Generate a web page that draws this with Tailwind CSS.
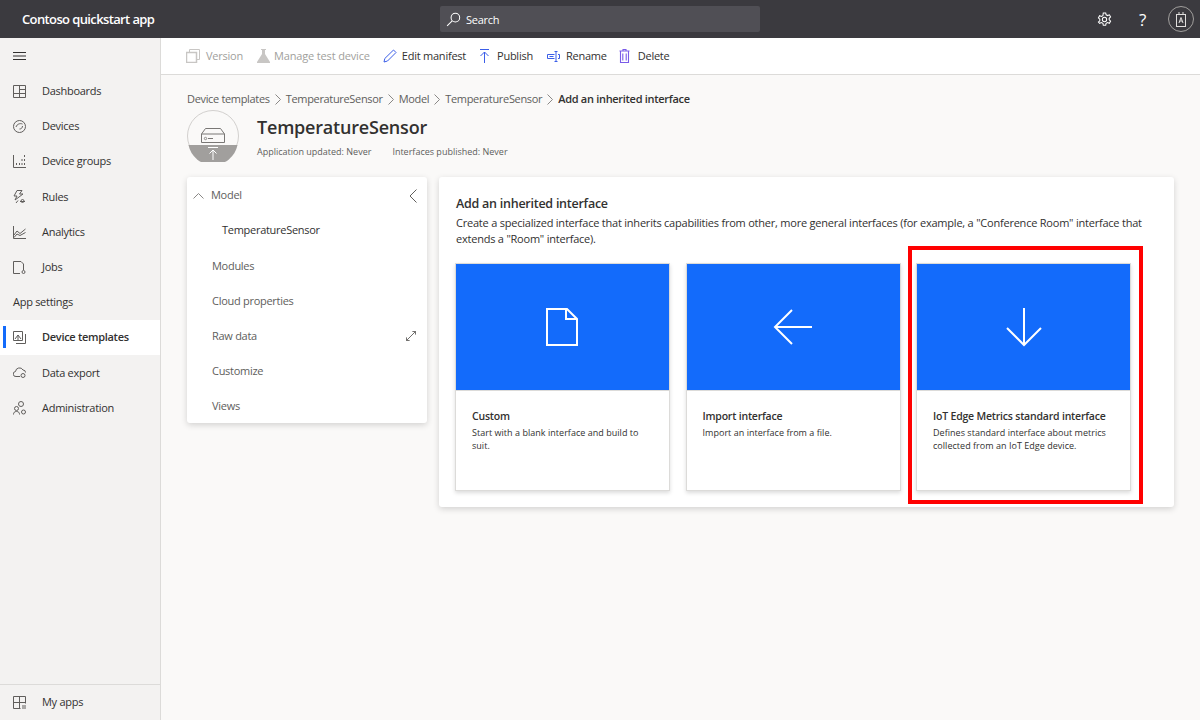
<!DOCTYPE html>
<html lang="en">

<head>
	<meta charset="UTF-8" />
	<title>Contoso quickstart app</title>
	<script src="https://cdn.jsdelivr.net/npm/@tailwindcss/browser@4"></script>
</head>

<body class="h-[720px] w-[1200px] overflow-hidden bg-[#faf9f8] font-['Open_Sans','Noto_Sans',sans-serif] text-[11px] tracking-[-0.28px] text-[#323130]">
	<!-- top bar -->
	<header class="relative flex h-[38px] items-center bg-[#3b3a3f] text-white">
		<div class="w-[440px] pl-[22px] pt-[2px] text-[13px] font-semibold tracking-[-0.62px]">Contoso quickstart app</div>
		<div class="flex h-[26px] w-[320px] items-center gap-[5px] rounded-[2px] bg-[#504f55] pl-[6px] text-[11px]">
			<svg class="h-[15px] w-[15px]" viewBox="0 0 16 16" fill="none" stroke="#fff" stroke-width="1.1"><circle cx="10" cy="6" r="4.6" /><path d="M6.6 9.4 1.2 14.8" /></svg>
			<span class="pt-[2px]">Search</span>
		</div>
		<div class="ml-auto flex items-center">
			<svg class="mr-[27px] h-[15px] w-[15px]" viewBox="0 0 16 16" fill="none" stroke="#fff" stroke-width="1.1"><circle cx="8" cy="8" r="2.3" /><path d="M6.7 1h2.6l.4 2 1.6.8 1.9-.8 1.3 2.3-1.5 1.4v1.7l1.5 1.3-1.3 2.4-1.9-.8-1.6.8-.4 2H6.7l-.4-2-1.6-.8-1.9.8L1.500 10.700 3 9.400V7.700L1.500 6.300 2.800 3.900l1.900.8 1.600-.8z" /></svg>
			<span class="mr-[22px] text-[17px] leading-none">?</span>
			<div class="mr-[6px] flex h-[26px] w-[26px] items-center justify-center rounded-full border border-[#a19f9d]">
				<svg class="h-[16px] w-[12px]" viewBox="0 0 12 16" fill="none" stroke="#e1dfdd"><rect x="1.500" y="3.500" width="9" height="12" /><path d="M4 1v2.500M8 1v2.500M4 12 6 6.500 8 12M4.800 10h2.400" /></svg>
			</div>
		</div>
	</header>

	<div class="flex h-[682px]">
		<!-- sidebar -->
		<nav class="flex w-[161px] shrink-0 flex-col border-r border-[#dcdbd9] bg-[#f3f2f1]">
			<div class="flex h-[35.7px] items-center pl-[13px]">
				<svg class="h-[10px] w-[13px]" viewBox="0 0 13 10" stroke="#323130"><path d="M0 1.500h13M0 5h13M0 8.500h13" /></svg>
			</div>
			<div class="flex h-[35.2px] items-center gap-[16px] pl-[13px]">
				<svg class="h-[13px] w-[13px]" viewBox="0 0 13 13" fill="none" stroke="#605e5c"><path d="M.5.500h12v12H.5zM6.500.500v12M6.500 4.500h6M.5 8.500h6M6.500 8.500h6" /></svg>
				<span>Dashboards</span>
			</div>
			<div class="flex h-[35.2px] items-center gap-[16px] pl-[13px]">
				<svg class="h-[13px] w-[13px]" viewBox="0 0 13 13" fill="none" stroke="#605e5c"><circle cx="6.500" cy="6.500" r="6" /><path d="M3 7c1-3 4-4 6.500-3M9.500 6c0 2-1.500 3-3 3" /></svg>
				<span>Devices</span>
			</div>
			<div class="flex h-[35.2px] items-center gap-[16px] pl-[13px]">
				<svg class="h-[13px] w-[13px]" viewBox="0 0 13 13" fill="none" stroke="#605e5c"><path d="M.5 0v12.500H13M3.500 10v-2M6.500 10V8M9 10V8M11.500 10V8M9 6V4M11.500 6V4M11.500 2V0" /></svg>
				<span>Device groups</span>
			</div>
			<div class="flex h-[35.2px] items-center gap-[16px] pl-[13px]">
				<svg class="h-[14px] w-[13px]" viewBox="0 0 13 14" fill="none" stroke="#605e5c"><path d="M4 .5h5L6.500 4H10L2 10l2-4H1zM3 13l2-2.500M7 11.500h5" /><circle cx="9.500" cy="11" r="1.500" /></svg>
				<span>Rules</span>
			</div>
			<div class="flex h-[35.2px] items-center gap-[16px] pl-[13px]">
				<svg class="h-[13px] w-[13px]" viewBox="0 0 13 13" fill="none" stroke="#605e5c"><path d="M.5 0v12.500H13M1 9l3-4 3 2.500L12.500 3M1 11.500 4 8l3 1.500 5.500-3" /></svg>
				<span>Analytics</span>
			</div>
			<div class="flex h-[35.2px] items-center gap-[16px] pl-[13px]">
				<svg class="h-[13px] w-[13px]" viewBox="0 0 13 13" fill="none" stroke="#605e5c"><path d="M7 12.500H.5V.5H8l2.500 2.500v6" /><circle cx="10.500" cy="11" r="1.500" /></svg>
				<span>Jobs</span>
			</div>
			<div class="flex h-[35.2px] items-center pl-[13px]">App settings</div>
			<div class="relative flex h-[35.2px] items-center gap-[16px] bg-white pl-[13px] font-semibold tracking-[-0.3px]">
				<div class="absolute left-[3px] top-[6px] h-[22px] w-[3px] bg-[#136bfb]"></div>
				<svg class="h-[13px] w-[13px]" viewBox="0 0 13 13" fill="none" stroke="#605e5c"><path d="M.5.500h9v9h-9zM3 12.500h9.500V3M2 8l3-4 3 4M5 4v5" /></svg>
				<span>Device templates</span>
			</div>
			<div class="flex h-[35.2px] items-center gap-[16px] pl-[13px]">
				<svg class="h-[11px] w-[13px]" viewBox="0 0 13 11" fill="none" stroke="#605e5c"><path d="M7 9.500H3a2.500 2.500 0 0 1-.5-5A4 4 0 0 1 10 3a2.500 2.500 0 0 1 2.500 2.500" /><circle cx="10" cy="8.500" r="2" /></svg>
				<span>Data export</span>
			</div>
			<div class="flex h-[35.2px] items-center gap-[16px] pl-[13px]">
				<svg class="h-[14px] w-[13px]" viewBox="0 0 13 14" fill="none" stroke="#605e5c"><circle cx="8" cy="3" r="2.500" /><circle cx="3.500" cy="7.500" r="2" /><path d="M.5 13.500c0-2 1-3 3-3s3 1 3 3" /><circle cx="10.500" cy="11" r="2" /></svg>
				<span>Administration</span>
			</div>
			<div class="mt-auto flex h-[36px] items-center gap-[16px] border-t border-[#dcdbd9] pl-[13px]">
				<svg class="h-[13px] w-[13px]" viewBox="0 0 13 13" fill="none" stroke="#605e5c"><path d="M7.500 12.500H.5V.5h12v7M6.500.5v12M.5 6.500h12" /><path d="M9 10h4M9 12h4" /></svg>
				<span>My apps</span>
			</div>
		</nav>

		<main class="min-w-0 flex-1">
			<!-- command bar -->
			<div class="flex h-[37px] items-center border-b border-[#dcdbd9] bg-white pl-[25px] tracking-[-0.24px]">
				<div class="flex items-center gap-[6px] text-[#a19f9d]">
					<svg class="h-[14px] w-[14px]" viewBox="0 0 14 14" fill="none" stroke="#c8c6c4"><rect x=".5" y="3.500" width="10" height="10" stroke-width="1.500" /><path d="M3.500 3.500v-3h10v10h-3" /></svg>
					<span>Version</span>
				</div>
				<div class="ml-[14px] flex items-center gap-[4px] tracking-[-0.15px] text-[#a19f9d]">
					<svg class="h-[14px] w-[13px]" viewBox="0 0 13 14" fill="#c8c6c4"><path d="M4 0h5v1H8v4l5 8v1H0v-1l5-8V1H4z" /></svg>
					<span>Manage test device</span>
				</div>
				<div class="ml-[13px] flex items-center gap-[5px]">
					<svg class="h-[14px] w-[14px]" viewBox="0 0 14 14" fill="none" stroke="#3b5ee8"><path d="M1 13l.8-3.500L10.500 1l2.500 2.500L4.500 12z" /></svg>
					<span>Edit manifest</span>
				</div>
				<div class="ml-[13px] flex items-center gap-[7px]">
					<svg class="h-[14px] w-[11px]" viewBox="0 0 11 14" fill="none" stroke="#3b5ee8"><path d="M1 .5h9M5.500 3v11M1.500 7l4-4 4 4" /></svg>
					<span>Publish</span>
				</div>
				<div class="ml-[14px] flex items-center gap-[6px]">
					<svg class="h-[11px] w-[13px]" viewBox="0 0 13 11" fill="none" stroke="#3b5ee8"><path d="M7.500 3.500H.5v4h7M11 3.500h1.500v4H11M9 .5v10M7.500.5h3M7.500 10.500h3M2.500 5.500h4" /></svg>
					<span>Rename</span>
				</div>
				<div class="ml-[12px] flex items-center gap-[8px]">
					<svg class="h-[14px] w-[11px]" viewBox="0 0 11 14" fill="none" stroke="#7a5be8"><path d="M.5 2h10M4 2V.5h3V2M1.500 2v11.500h8V2M3.800 4.500v7M7.200 4.500v7" stroke-width="1.100" /></svg>
					<span>Delete</span>
				</div>
			</div>

			<div class="px-[26px]">
				<!-- breadcrumb -->
				<div class="mt-[16px] flex h-[16px] items-center gap-[5px] tracking-[-0.33px] text-[#605e5c]">
					<span>Device templates</span>
					<svg class="h-[11px] w-[6px]" viewBox="0 0 6 11" fill="none" stroke="#8a8886"><path d="M.5.500 5.500 5.500.5 10.500" /></svg>
					<span>TemperatureSensor</span>
					<svg class="h-[11px] w-[6px]" viewBox="0 0 6 11" fill="none" stroke="#8a8886"><path d="M.5.500 5.500 5.500.5 10.500" /></svg>
					<span>Model</span>
					<svg class="h-[11px] w-[6px]" viewBox="0 0 6 11" fill="none" stroke="#8a8886"><path d="M.5.500 5.500 5.500.5 10.500" /></svg>
					<span>TemperatureSensor</span>
					<svg class="h-[11px] w-[6px]" viewBox="0 0 6 11" fill="none" stroke="#8a8886"><path d="M.5.500 5.500 5.500.5 10.500" /></svg>
					<span class="font-semibold tracking-[-0.3px] text-[#323130]">Add an inherited interface</span>
				</div>

				<!-- title -->
				<div class="mt-[3px] flex h-[52px] items-start gap-[18px]">
					<svg class="h-[52px] w-[52px]" viewBox="0 0 52 52">
						<circle cx="26" cy="26" r="25.500" fill="#faf9f8" stroke="#d2d0ce" />
						<path d="M1.500 35h49a25 25 0 0 1-49 0z" fill="#a19f9d" />
						<path d="M14.500 32.500V24l4-5.500h15l4 5.500v8.500z" fill="none" stroke="#797775" />
						<path d="M14.500 24h23M21 28.500h5" stroke="#797775" />
						<circle cx="18.500" cy="28.500" r="1.200" fill="none" stroke="#797775" stroke-width=".8" />
						<path d="M21 37.500h10M26 50V40M22.500 43.500 26 40l3.500 3.500" fill="none" stroke="#fff" />
					</svg>
					<div class="pt-[5px]">
						<div class="text-[18px] font-semibold leading-[25px] tracking-[-0.2px]">TemperatureSensor</div>
						<div class="mt-[5px] flex gap-[21px] text-[9px] tracking-normal text-[#605e5c]">
							<span>Application updated: Never</span>
							<span>Interfaces published: Never</span>
						</div>
					</div>
				</div>

				<div class="mt-[15px] flex items-start gap-[12px]">
					<!-- left tree -->
					<aside class="h-[246px] w-[240px] shrink-0 rounded-[3px] bg-white pt-[1px] text-[#605e5c] shadow-[0_2px_6px_rgba(0,0,0,0.16)]">
						<div class="flex h-[35px] items-center pl-[6px] pr-[10px]">
							<svg class="h-[6px] w-[11px]" viewBox="0 0 11 6" fill="none" stroke="#8a8886"><path d="M.5 5.500 5.500.5l5 5" /></svg>
							<span class="ml-[7px]">Model</span>
							<svg class="ml-auto h-[14px] w-[8px]" viewBox="0 0 8 14" fill="none" stroke="#605e5c"><path d="M7.500.5 1 7l6.500 6.500" /></svg>
						</div>
						<div class="flex h-[35.2px] items-center pl-[35px] text-[#323130]">TemperatureSensor</div>
						<div class="flex h-[35.2px] items-center pl-[25px]">Modules</div>
						<div class="flex h-[35.2px] items-center pl-[25px]">Cloud properties</div>
						<div class="flex h-[35.2px] items-center justify-between pl-[25px] pr-[11px]">
							<span>Raw data</span>
							<svg class="h-[10px] w-[10px]" viewBox="0 0 11 11" fill="none" stroke="#605e5c"><path d="M.5 10.500l10-10M.5 7v3.500H4M7 .5h3.500V4" /></svg>
						</div>
						<div class="flex h-[35.2px] items-center pl-[25px]">Customize</div>
						<div class="flex h-[35.2px] items-center pl-[25px]">Views</div>
					</aside>

					<!-- interface options -->
					<section class="h-[330px] w-[735px] rounded-[3px] bg-white pl-[16px] pr-[17px] pt-[18px] shadow-[0_2px_6px_rgba(0,0,0,0.16)]">
						<h2 class="pl-[1px] text-[12.5px] font-semibold leading-[17px] tracking-[-0.25px]">Add an inherited interface</h2>
						<p class="mt-[3px] pl-[1px] text-[11px] leading-[16px] tracking-[-0.22px]">Create a specialized interface that inherits capabilities from other, more general interfaces (for example, a "Conference Room" interface that extends a "Room" interface).</p>
						<div class="mt-[16px] flex gap-[15.5px]">
							<div class="h-[228px] w-[215px] border border-[#dcdbd9] bg-white shadow-[0_2px_4px_rgba(0,0,0,0.14)]">
								<div class="flex h-[127px] items-center justify-center border-b border-[#dcdbd9] bg-[#136bfb]">
									<svg class="mr-[2px] h-[38px] w-[32px]" viewBox="0 0 32 38" fill="none" stroke="#fff" stroke-width="2"><path d="M1 1h20l10 10v26H1zM20 1v10h11" /></svg>
								</div>
								<div class="px-[16px] pt-[17px]">
									<div class="text-[10.5px] font-semibold leading-[16px] tracking-[-0.2px]">Custom</div>
									<p class="mt-[2px] text-[9px] leading-[13px] tracking-[0.03px]">Start with a blank interface and build to suit.</p>
								</div>
							</div>
							<div class="h-[228px] w-[215px] border border-[#dcdbd9] bg-white shadow-[0_2px_4px_rgba(0,0,0,0.14)]">
								<div class="flex h-[127px] items-center justify-center border-b border-[#dcdbd9] bg-[#136bfb]">
									<svg class="h-[36px] w-[40px]" viewBox="0 0 40 36" fill="none" stroke="#fff" stroke-width="2"><path d="M39 18H2M19 1 2 18l17 17" /></svg>
								</div>
								<div class="px-[16px] pt-[17px]">
									<div class="text-[10.5px] font-semibold leading-[16px] tracking-[-0.2px]">Import interface</div>
									<p class="mt-[2px] text-[9px] leading-[13px] tracking-[0.03px]">Import an interface from a file.</p>
								</div>
							</div>
							<div class="h-[228px] w-[215px] border border-[#dcdbd9] bg-white shadow-[0_2px_4px_rgba(0,0,0,0.14)]">
								<div class="flex h-[127px] items-center justify-center border-b border-[#dcdbd9] bg-[#136bfb]">
									<svg class="h-[40px] w-[36px]" viewBox="0 0 36 40" fill="none" stroke="#fff" stroke-width="2"><path d="M18 1v37M1 21l17 17 17-17" /></svg>
								</div>
								<div class="px-[16px] pt-[17px]">
									<div class="whitespace-nowrap text-[10.5px] font-semibold leading-[16px] tracking-[-0.2px]">IoT Edge Metrics standard interface</div>
									<p class="mt-[2px] text-[9px] leading-[13px] tracking-[0.03px]">Defines standard interface about metrics collected from an IoT Edge device.</p>
								</div>
							</div>
						</div>
					</section>
				</div>
			</div>
		</main>
	</div>

	<!-- red callout -->
	<div class="absolute left-[908px] top-[246px] h-[258px] w-[235px] border-4 border-[#ff0000]"></div>
</body>

</html>
